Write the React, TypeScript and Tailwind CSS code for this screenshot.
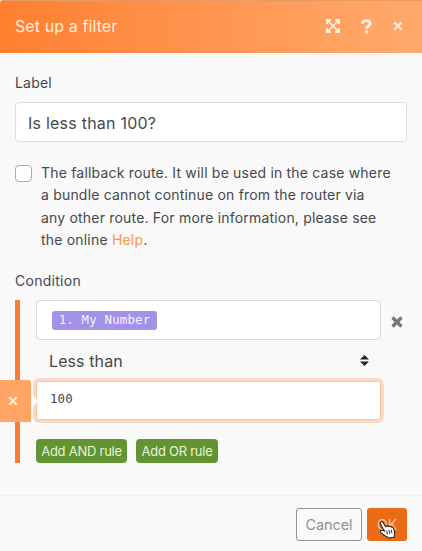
import React from "react";

function Cross({ className, width = 3 }: { className: string; width?: number }) {
  return (
    <svg viewBox="0 0 12 12" className={className} fill="none" stroke="currentColor" strokeWidth={width}>
      <path d="M1.5 1.5 10.5 10.5M10.5 1.5 1.5 10.5" />
    </svg>
  );
}

function ExpandIcon() {
  return (
    <svg viewBox="0 0 14 14" className="h-[14px] w-[14px]" fill="none" stroke="currentColor">
      <path d="M2 2l10 10M12 2 2 12" strokeWidth="1.5" />
      <path d="M1.1 5v-3.9h3.9M9 1.1h3.9V5M12.9 9v3.9H9M5 12.9H1.1V9" strokeWidth="2.1" />
    </svg>
  );
}

function QuestionIcon() {
  return (
    <svg viewBox="0 0 11 15" className="h-[15px] w-[11px]" fill="none" stroke="currentColor" strokeWidth="3">
      <path d="M1 4.7C1.6 2.5 3 1.7 5.2 1.7c2.4 0 4 1.1 4 2.9 0 2.6-3.7 2.3-3.7 5.4" />
      <path d="M3.9 13h3.2" />
    </svg>
  );
}

function HandCursor() {
  return (
    <svg viewBox="0 0 18 20" className="absolute left-[11px] top-[12px] h-[19px] w-[18px]" preserveAspectRatio="none" fill="white" stroke="#2b211b" strokeWidth="1.1" strokeLinejoin="round">
      <path d="M5.3 9.6 2.4 4.2C1.3 2.1 3.8.6 5.1 2.6l2.6 4.6c.5-1.3 2.1-1.3 2.6-.2.9-1 2.4-.6 2.8.5 1-.6 2.1-.1 2.4 1l1 3.6c.4 1.5.2 2.8-.3 3.9l.4 2-6.3 1.3-.7-1.5c-2.2-.6-4.7-2.6-6.5-4.3-1.9-1.9-.3-3.3 1.3-2.7l2.3.9z" />
      <path d="m8.6 11.2.9 4M10.9 10.6l.9 4M13.1 10.1l.9 3.9" strokeWidth="1" />
    </svg>
  );
}

export default function App() {
  return (
    <div className="flex h-[551px] w-[422px] flex-col overflow-hidden bg-[#f9f9f9] font-['Inter','Liberation_Sans',sans-serif] text-[14px] text-[#47484a]">
      <header className="flex h-[53px] shrink-0 items-center rounded-tl-[3px] border-t border-[#e79a62] bg-linear-to-r from-[#ff7f2e] to-[#ffaa6c] pb-[2px] pl-[15px] pr-[19px] text-[#ffeedb]">
        <h1 className="flex-1 text-[16px] tracking-[0.1px]">Set up a filter</h1>
        <div className="flex items-center">
          <ExpandIcon />
          <span className="ml-[21px]"><QuestionIcon /></span>
          <Cross className="ml-[21px] h-[10px] w-[10px]" width={2.4} />
        </div>
      </header>

      <main className="flex h-[443px] shrink-0 flex-col border-b border-[#f0f0f0] pl-[15px] pr-[15px]">
        <label className="mt-[19px] h-[22px] leading-[22px] tracking-[0.2px]">Label</label>
        <div className="mt-[8px] flex h-[40px] shrink-0 items-center rounded-[4px] border border-[#dedede] bg-white px-[12px] pt-px text-[16px] tracking-[0.23px]">Is less than 100?</div>

        <div className="mt-[20px] flex">
          <span className="mt-[3px] h-[17px] w-[17px] shrink-0 rounded-[4px] border border-[#aaa] bg-white" />
          <p className="ml-[9px] whitespace-nowrap leading-[22.3px] tracking-[0.19px]">
            The fallback route. It will be used in the case where<br />
            a bundle cannot continue on from the router via<br />
            any other route. For more information, please see<br />
            the online <a className="text-[#ff954d]">Help</a>.
          </p>
        </div>

        <h2 className="mt-[19px] h-[22px] shrink-0 leading-[22px] tracking-[0.27px]">Condition</h2>
        <section className="relative mt-[8px] flex h-[163px] shrink-0">
          <div className="w-[5px] shrink-0 bg-[#f97b36]" />
          <div className="ml-[16px] flex w-[345px] flex-col">
            <div className="flex h-[40px] shrink-0 items-center rounded-[4px] border border-[#dddde0] bg-white pl-[15px]">
              <span className="flex h-[19px] w-[105px] items-center justify-center rounded-[3px] bg-[#a391e8] font-['DejaVu_Sans_Mono',monospace] text-[12.4px] tracking-[0.17px] text-[#f6f1ff]">1. My Number</span>
            </div>
            <div className="flex h-[41px] shrink-0 items-center pl-[13px] pr-[12px] text-[16px]">
              <span className="flex-1 tracking-[0.1px]">Less than</span>
              <svg viewBox="0 0 9 11" className="h-[11px] w-[9px] fill-[#222]">
                <path d="M4.5 0 9 4.5H0zM0 6.5h9L4.5 11z" />
              </svg>
            </div>
            <div className="h-[39px] shrink-0 rounded-[3px] border border-[#fac69c] bg-white pl-[13px] pt-[8px] font-['DejaVu_Sans_Mono',monospace] text-[12.4px] leading-[18px] tracking-[0.15px] text-[#444] shadow-[0_0_0_3px_#f9dac5]">100</div>
            <div className="mt-[19px] flex gap-[9px] text-[13px] tracking-[-0.25px] text-[#e8f3d9]">
              <button className="h-[24px] w-[91px] whitespace-nowrap rounded-[4px] bg-[#629532] pt-px">Add AND rule</button>
              <button className="h-[24px] w-[82px] whitespace-nowrap rounded-[4px] bg-[#629532] pt-px">Add OR rule</button>
            </div>
          </div>
          <Cross className="ml-[10px] mt-[16px] h-[12px] w-[12px] text-[#777]" width={3.3} />
          <div className="absolute left-[-15px] top-[80px] flex h-[42px] w-[31px] items-center rounded-tr-[2px] bg-[#ffa666] pl-[8px] text-[#fff0dd]">
            <Cross className="h-[10px] w-[10px]" width={2.2} />
          </div>
          <span className="absolute left-[17px] top-[94px] border-y-[7px] border-l-[6px] border-y-transparent border-l-[#fdfdfd]" />
        </section>
      </main>

      <footer className="flex flex-1 items-start justify-end gap-[5px] pr-[15px] pt-[12px]">
        <button className="h-[33px] w-[66px] rounded-[3px] border border-[#919191] pt-px text-[14.5px] tracking-[-0.1px] text-[#919191]">Cancel</button>
        <button className="relative h-[33px] w-[40px] rounded-[3px] bg-[#eb6b19] text-[14px] text-[#ffc69b]">
          OK
          <HandCursor />
        </button>
      </footer>
    </div>
  );
}
